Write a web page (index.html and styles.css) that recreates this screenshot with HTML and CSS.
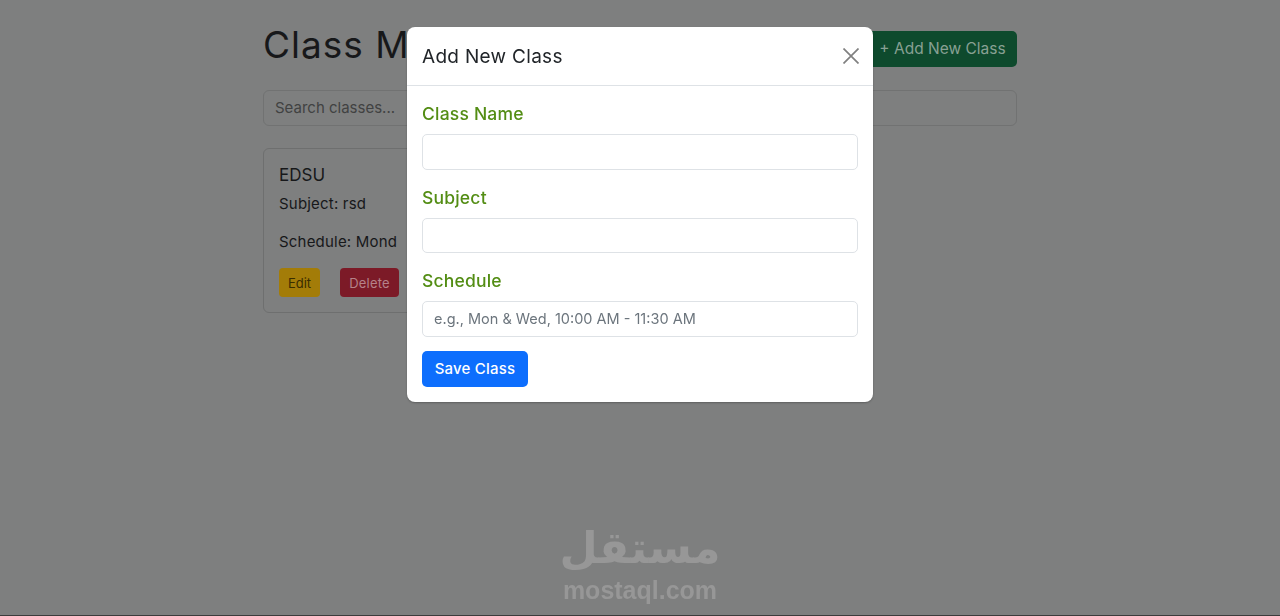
FILE: index.html
```html
<!DOCTYPE html>
<html lang="en">
<head>
    <meta charset="UTF-8">
    <meta name="viewport" content="width=device-width, initial-scale=1.0">
    <title>Class Management</title>
    <link rel="stylesheet" href="styles.css">
</head>
<body>
    <main class="container">
        <header class="page-head">
            <h1>Class Management</h1>
            <button class="btn btn-add">+ Add New Class</button>
        </header>
        <input class="search" type="text" placeholder="Search classes...">
        <section class="card">
            <h5>EDSU</h5>
            <p>Subject: rsd</p>
            <p>Schedule: Mond</p>
            <div class="card-actions">
                <button class="btn btn-edit">Edit</button>
                <button class="btn btn-delete">Delete</button>
            </div>
        </section>
    </main>

    <div class="modal">
        <div class="modal-head">
            <h2>Add New Class</h2>
            <svg class="close" width="16" height="16" viewBox="0 0 16 16">
                <path d="M0.5 0.5L15.5 15.5M15.5 0.5L0.5 15.5" />
            </svg>
        </div>
        <form class="modal-body">
            <label for="name">Class Name</label>
            <input id="name" type="text">
            <label for="subject">Subject</label>
            <input id="subject" type="text">
            <label for="schedule">Schedule</label>
            <input id="schedule" type="text" placeholder="e.g., Mon &amp; Wed, 10:00 AM - 11:30 AM">
            <button class="btn btn-save" type="button">Save Class</button>
        </form>
    </div>

    <div class="watermark">
        <span class="wm-ar" lang="ar" dir="rtl">مستقل</span>
        <span class="wm-en">mostaql.com</span>
    </div>
</body>
</html>
```

FILE: styles.css
```css
* { box-sizing: border-box; }
html, body { height: 100%; }
body {
    margin: 0;
    height: 616px;
    overflow: hidden;
    background: #7e7f7f;
    border-bottom: 1px solid #3c3c3c;
    font-family: Inter, "Noto Sans", sans-serif;
    color: #17181a;
}

.container { width: 754px; margin: 0 auto; padding-top: 21px; }
.page-head { display: flex; justify-content: space-between; height: 48px; margin-bottom: 21px; }
h1 { margin: 0; font-size: 37px; line-height: 48px; font-weight: 400; letter-spacing: 1px; }

.btn {
    border: 0;
    border-radius: 4px;
    font-family: inherit;
    font-size: 14px;
    cursor: pointer;
}
.btn-add {
    align-self: flex-end;
    height: 36px;
    width: 149px;
    margin-bottom: 2px;
    padding-bottom: 3px;
    background: #0e4a2d;
    color: #88a093;
    font-size: 15.5px;
    border-radius: 5px;
}

.search {
    display: block;
    width: 100%;
    height: 36px;
    padding: 0 11px 2px;
    background: #7e7f7f;
    border: 1px solid #717272;
    border-radius: 6px;
    font: 15px Inter, sans-serif;
}
.search::placeholder { color: #414242; opacity: 1; }

.card {
    width: 246px;
    height: 165px;
    margin-top: 22px;
    padding: 15px;
    border: 1px solid #6e6f6f;
    border-radius: 6px;
}
.card h5 { margin: 0 0 7px; font-size: 17px; font-weight: 400; line-height: 22px; }
.card p { margin: 0 0 16px; font-size: 15px; line-height: 22px; white-space: nowrap; letter-spacing: 0.2px; }
.card p:last-of-type { margin-bottom: 15px; }
.card-actions { display: flex; gap: 20px; }
.btn-edit { width: 41px; height: 29px; background: #a37c08; color: #3a2d00; font-size: 13px; }
.btn-delete { width: 59px; height: 29px; background: #7c1a27; color: #b58289; font-size: 13px; letter-spacing: 0.2px; }

.modal {
    position: fixed;
    top: 27px;
    left: 407px;
    width: 466px;
    height: 375px;
    background: #fff;
    border-radius: 8px;
    box-shadow: 0 1px 2px rgba(0, 0, 0, 0.25);
}
.modal-head {
    display: flex;
    justify-content: space-between;
    align-items: center;
    height: 59px;
    padding: 0 14px 0 15px;
    border-bottom: 1px solid #dee2e6;
}
.modal-head h2 { margin: 0; font-size: 19px; font-weight: 400; letter-spacing: 0.3px; color: #212529; }
.close path { stroke: #808080; stroke-width: 1.7; fill: none; }

.modal-body { display: flex; flex-direction: column; align-items: flex-start; padding: 16px 15px; }
.modal-body label { height: 24px; line-height: 24px; margin-bottom: 8px; font-size: 17.5px; font-weight: 500; letter-spacing: 0.2px; color: #538d14; }
.modal-body input {
    width: 100%;
    height: 35.5px;
    margin-bottom: 16px;
    padding: 0 11px;
    border: 1px solid #dee2e6;
    border-radius: 5px;
    font: 14.5px Inter, sans-serif;
}
.modal-body input:last-of-type { margin-bottom: 14.5px; }
.modal-body input::placeholder { color: #6c757d; opacity: 1; }
.btn-save { width: 106px; height: 36px; background: #0d6efd; color: #fff; font-size: 15px; font-weight: 500; letter-spacing: 0.2px; border-radius: 5px; padding-bottom: 2px; }

.watermark {
    position: fixed;
    left: 540px;
    top: 519px;
    width: 200px;
    display: flex;
    flex-direction: column;
    align-items: center;
    color: #979797;
    pointer-events: none;
}
.wm-ar { font: bold 44px/58px "DejaVu Sans", sans-serif; }
.wm-en { font: bold 25px/26px "Liberation Sans", Arial, sans-serif; }
```
